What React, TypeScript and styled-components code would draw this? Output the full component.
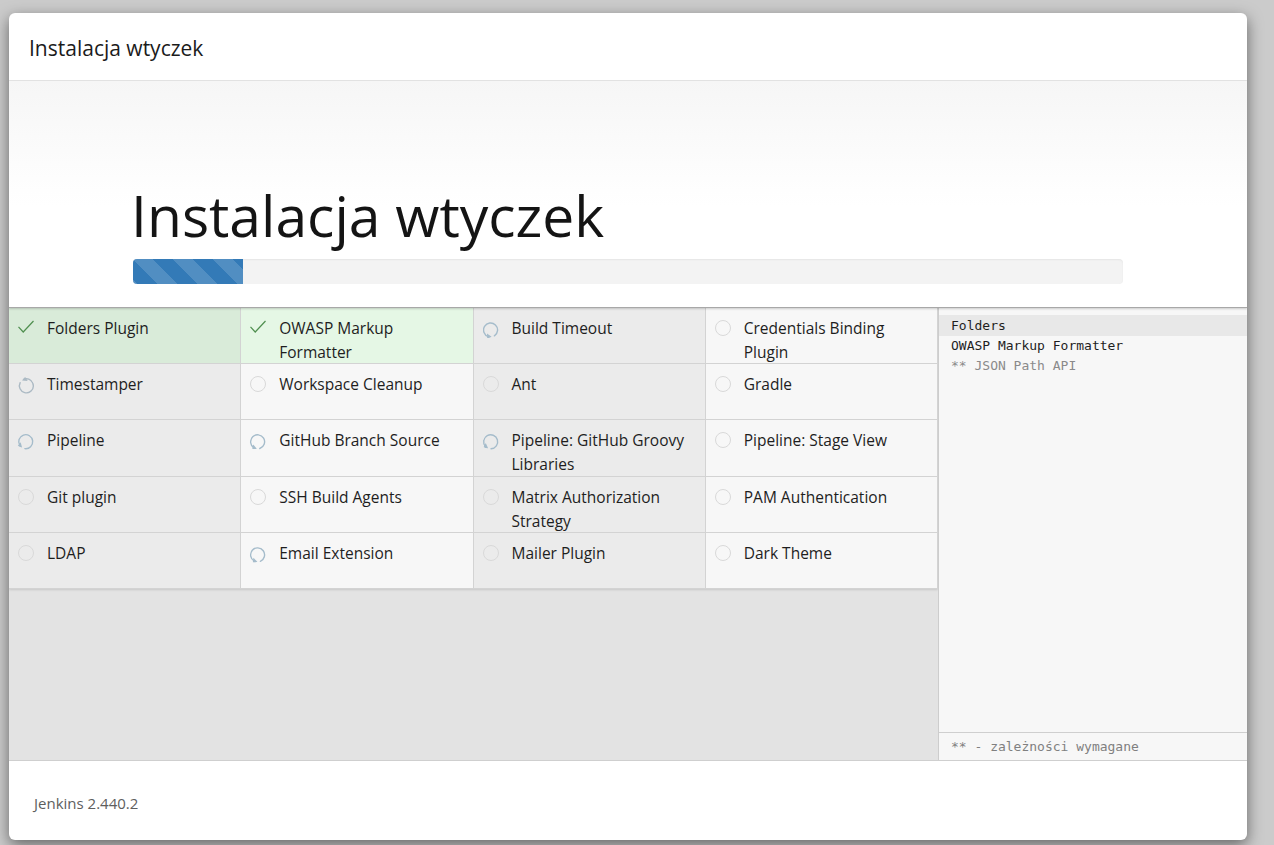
import React from "react";
import styled, { createGlobalStyle } from "styled-components";

const GlobalStyle = createGlobalStyle`
  html, body { margin: 0; padding: 0; }
  body {
    background: #cbcbcb;
    font-family: "Open Sans", "Noto Sans", Arial, sans-serif;
    color: #222;
  }
  * { box-sizing: border-box; }
`;

const Backdrop = styled.div`
  height: 845px;
  padding: 13px 27px 5px 9px;
`;

const Modal = styled.div`
  height: 827px;
  background: #fff;
  border-radius: 6px;
  box-shadow: 0 5px 15px rgba(0, 0, 0, 0.5);
  display: flex;
  flex-direction: column;
  overflow: hidden;
`;

const Header = styled.header`
  height: 68px;
  flex: none;
  display: flex;
  align-items: center;
  padding: 2px 20px 0;
  border-bottom: 1px solid #e5e5e5;
`;

const HeaderTitle = styled.h4`
  margin: 0;
  font-size: 21px;
  font-weight: 400;
  color: #1b1b1b;
`;

const Jumbotron = styled.section`
  height: 227px;
  flex: none;
  position: relative;
  z-index: 1;
  display: flex;
  flex-direction: column;
  justify-content: flex-end;
  padding: 0 124px 23px;
  background: linear-gradient(to bottom, #f6f6f6 0%, #ffffff 55%);
  border-bottom: 1px solid #a8a8a8;
  box-shadow: 0 1px 2px rgba(0, 0, 0, 0.18);
`;

const BigTitle = styled.h1`
  margin: 0 0 10px -2px;
  font-size: 57px;
  line-height: 68px;
  font-weight: 400;
  color: #141414;
`;

const Track = styled.div`
  height: 25px;
  background: #f3f3f3;
  border-radius: 4px;
  box-shadow: inset 0 1px 2px rgba(0, 0, 0, 0.06);
  overflow: hidden;
`;

const Fill = styled.div`
  height: 100%;
  background-color: #337ab7;
  background-image: linear-gradient(
    45deg,
    rgba(255, 255, 255, 0.15) 25%,
    transparent 25%,
    transparent 50%,
    rgba(255, 255, 255, 0.15) 50%,
    rgba(255, 255, 255, 0.15) 75%,
    transparent 75%,
    transparent
  );
  background-size: 40px 40px;
`;

const Content = styled.main`
  height: 453px;
  flex: none;
  display: flex;
  border-bottom: 1px solid #cfcfcf;
`;

const PluginArea = styled.div`
  flex: 1;
  background: #e3e3e3;
`;

const PluginGrid = styled.div`
  display: grid;
  grid-template-columns: repeat(4, 1fr);
  grid-auto-rows: 56.2px;
  box-shadow: 0 1px 2px rgba(0, 0, 0, 0.12);
`;

type CellProps = { $odd: boolean; $done: boolean };

const Cell = styled.div<CellProps>`
  display: flex;
  align-items: flex-start;
  gap: 13px;
  padding: 8px 12px 0 9px;
  border-right: 1px solid #d3d3d3;
  border-bottom: 1px solid #d3d3d3;
  background: ${(p) =>
    p.$done ? (p.$odd ? "#d9ebd9" : "#e5f7e5") : p.$odd ? "#ebebeb" : "#f7f7f7"};
  font-size: 15.5px;
  line-height: 24px;
  color: #1e1e1e;
`;

const IconBox = styled.span`
  flex: none;
  width: 16px;
  height: 16px;
  margin-top: 4px;
  display: block;
`;

const Circle = styled.span`
  display: block;
  width: 16px;
  height: 16px;
  border-radius: 50%;
  border: 1px solid #d9d9d9;
`;

const Name = styled.span``;

const LogPanel = styled.aside`
  width: 309px;
  flex: none;
  display: flex;
  flex-direction: column;
  background: #f7f7f7;
  border-left: 1px solid #cdcdcd;
  font-family: "DejaVu Sans Mono", "Liberation Mono", monospace;
  font-size: 13px;
`;

const LogList = styled.div`
  flex: 1;
  padding-top: 7px;
`;

const LogLine = styled.div<{ $current?: boolean; $dep?: boolean }>`
  height: ${(p) => (p.$current ? "21px" : "20px")};
  line-height: ${(p) => (p.$current ? "21px" : "20px")};
  padding-left: 12px;
  background: ${(p) => (p.$current ? "#e8e8e8" : "transparent")};
  color: ${(p) => (p.$dep ? "#8a8a8a" : "#1e1e1e")};
`;

const LogNote = styled.div`
  height: 28px;
  line-height: 28px;
  padding-left: 12px;
  border-top: 1px solid #cfcfcf;
  color: #808080;
`;

const Footer = styled.footer`
  flex: 1;
  display: flex;
  align-items: center;
  padding: 5px 25px 0;
  font-size: 15px;
  color: #5e5e5e;
`;

const Check = () => (
  <svg width="16" height="16" viewBox="0 0 16 16" style={{ overflow: "visible" }}>
    <path d="M0.5 4.8 L5.2 10 L15.5 -1" fill="none" stroke="#4f8f4f" strokeWidth="1.2" />
  </svg>
);

const Spinner = ({ rot, color = "#a5bccb" }: { rot: number; color?: string }) => (
  <svg width="16" height="16" viewBox="0 0 16 16" style={{ transform: `rotate(${rot}deg)` }}>
    <path
      d="M11.4 13.8 A7 7 0 1 0 5.4 14.6"
      fill="none"
      stroke={color}
      strokeWidth="1.4"
      strokeLinecap="round"
    />
    <path d="M4 11.6 L8.6 14.8 L4.2 16.8 Z" fill={color} />
  </svg>
);

type Status = "done" | "spin" | "wait";
type Plugin = { name: string; status: Status; rot?: number; color?: string };

const plugins: Plugin[] = [
  { name: "Folders Plugin", status: "done" },
  { name: "OWASP Markup Formatter", status: "done" },
  { name: "Build Timeout", status: "spin", rot: 0 },
  { name: "Credentials Binding Plugin", status: "wait" },
  { name: "Timestamper", status: "spin", rot: 150, color: "#acbac4" },
  { name: "Workspace Cleanup", status: "wait" },
  { name: "Ant", status: "wait" },
  { name: "Gradle", status: "wait" },
  { name: "Pipeline", status: "spin", rot: 40 },
  { name: "GitHub Branch Source", status: "spin", rot: 15 },
  { name: "Pipeline: GitHub Groovy Libraries", status: "spin", rot: 30 },
  { name: "Pipeline: Stage View", status: "wait" },
  { name: "Git plugin", status: "wait" },
  { name: "SSH Build Agents", status: "wait" },
  { name: "Matrix Authorization Strategy", status: "wait" },
  { name: "PAM Authentication", status: "wait" },
  { name: "LDAP", status: "wait" },
  { name: "Email Extension", status: "spin", rot: 10 },
  { name: "Mailer Plugin", status: "wait" },
  { name: "Dark Theme", status: "wait" },
];

const Icon = ({ p }: { p: Plugin }) => (
  <IconBox>
    {p.status === "done" && <Check />}
    {p.status === "spin" && <Spinner rot={p.rot ?? 0} color={p.color} />}
    {p.status === "wait" && <Circle />}
  </IconBox>
);

export default function App() {
  return (
    <>
      <GlobalStyle />
      <Backdrop>
        <Modal>
          <Header>
            <HeaderTitle>Instalacja wtyczek</HeaderTitle>
          </Header>
          <Jumbotron>
            <BigTitle>Instalacja wtyczek</BigTitle>
            <Track>
              <Fill style={{ width: "11.1%" }} />
            </Track>
          </Jumbotron>
          <Content>
            <PluginArea>
              <PluginGrid>
                {plugins.map((p, i) => (
                  <Cell key={p.name} $odd={i % 2 === 0} $done={p.status === "done"}>
                    <Icon p={p} />
                    <Name>{p.name}</Name>
                  </Cell>
                ))}
              </PluginGrid>
            </PluginArea>
            <LogPanel>
              <LogList>
                <LogLine $current>Folders</LogLine>
                <LogLine>OWASP Markup Formatter</LogLine>
                <LogLine $dep>** JSON Path API</LogLine>
              </LogList>
              <LogNote>** - zależności wymagane</LogNote>
            </LogPanel>
          </Content>
          <Footer>Jenkins 2.440.2</Footer>
        </Modal>
      </Backdrop>
    </>
  );
}
